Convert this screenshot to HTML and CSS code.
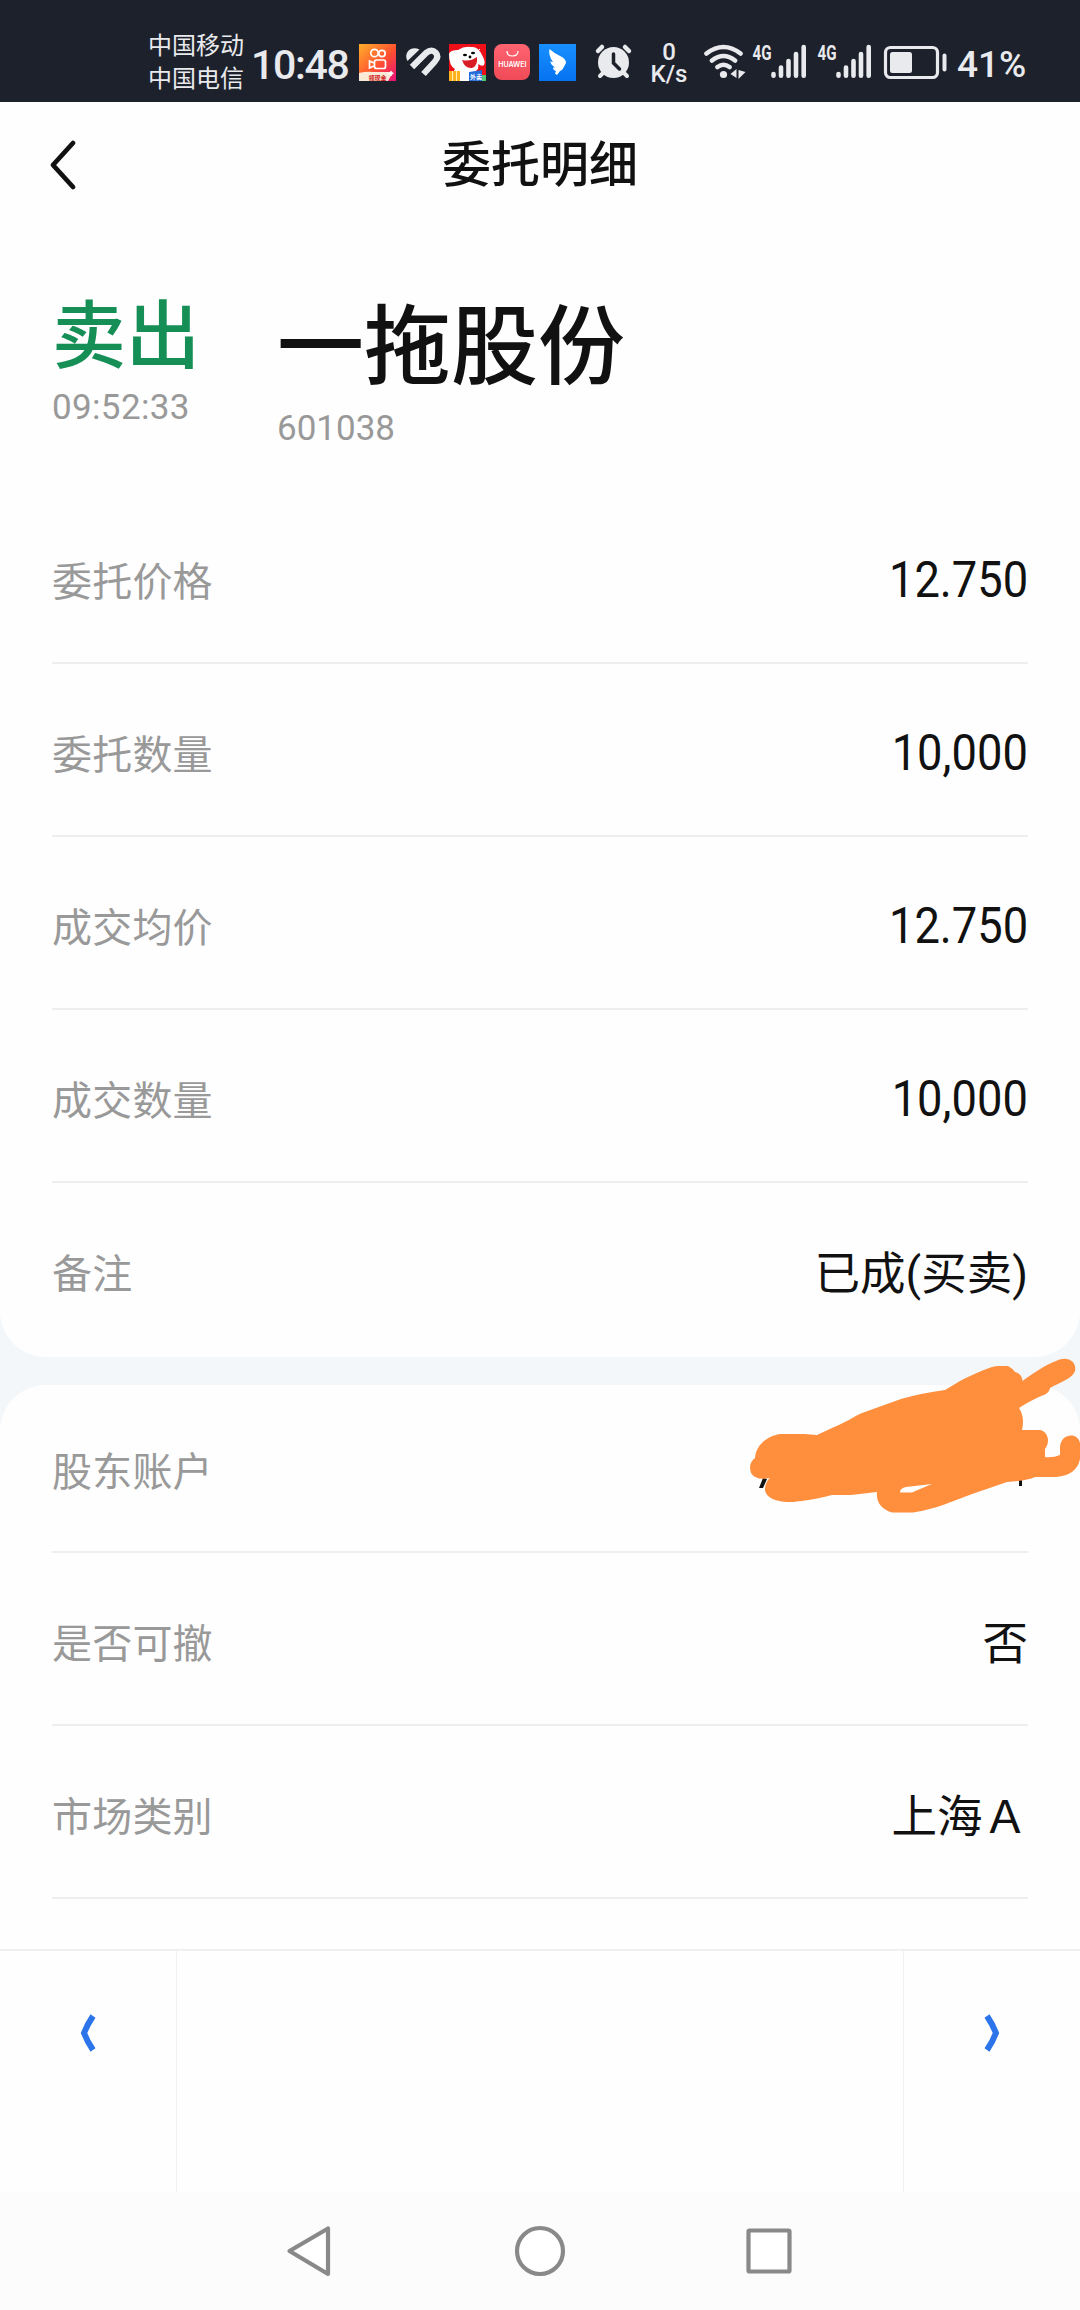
FILE: index.html
```html
<!DOCTYPE html>
<html lang="zh-CN">
<head>
<meta charset="utf-8">
<title>委托明细</title>
<link rel="stylesheet" href="styles.css">
</head>
<body>
<div class="screen">
  <header class="status">
    <div class="carriers"><span>中国移动</span><span>中国电信</span></div>
    <span class="clock">10:48</span>
    <svg class="status-icons" width="281" height="50" viewBox="355 38 281 50">
      <defs>
        <linearGradient id="ks" x1="0" y1="0" x2="1" y2="1"><stop offset="0" stop-color="#ffb02a"/><stop offset=".55" stop-color="#ff5030"/><stop offset="1" stop-color="#e8107a"/></linearGradient>
        <linearGradient id="hw" x1="0" y1="0" x2="0" y2="1"><stop offset="0" stop-color="#ff6470"/><stop offset="1" stop-color="#f04a58"/></linearGradient>
        <linearGradient id="dd" x1="0" y1="0" x2="0" y2="1"><stop offset="0" stop-color="#1890ff"/><stop offset="1" stop-color="#0672f0"/></linearGradient>
      </defs>
      <rect x="359" y="44" width="37" height="37" fill="url(#ks)"/>
      <g fill="none" stroke="#fff" stroke-width="1.700"><circle cx="374.500" cy="53" r="3.700"/><circle cx="382" cy="53.500" r="3.200"/><rect x="374.500" y="60" width="11" height="8.500" rx="2"/><path d="M374 63l-4.500-2v7l4.500-2"/></g>
      <path d="M359 73q8-2 14-1h20l-5 9h-29z" fill="#fbe9d8"/>
      <text x="368.500" y="79.500" class="badge-text red">领现金</text>
      <path d="M391 71v5M388.500 73.500h5" stroke="#fff" stroke-width="1.500"/>
      <g stroke="#e9eaee" fill="none"><path d="M407.500 61C403 53 411 45 419.500 49.500Z" fill="#e9eaee" stroke="none"/><path d="M412 67L426 53Q431.500 48.500 435.500 52.500T434.500 62L423.500 74" stroke-width="6.200"/></g>
      <rect x="449" y="44" width="37" height="37" fill="#ee0f18"/>
      <path d="M449 54q1-4 9-4 6-4 13-3 7-1 11 8 4 7 2 10-2 2-6-1 2 5-4 8 4 3 3 9h-26q1-8 4-12-6-3-6-15z" fill="#fff"/>
      <path d="M462 60q8 2 15-3 1 9-5 11-7 1-10-8z" fill="#d81e24"/><ellipse cx="465" cy="55" rx="2" ry="1.200"/><ellipse cx="473" cy="53" rx="2" ry="1.200"/><circle cx="470" cy="57" r="1.400"/>
      <path d="M449 71h11v10h-11z" fill="#ffb21d"/><path d="M452.500 71v10M456.500 71v10" stroke="#fff0b0"/>
      <path d="M469 72l13-2v11h-13z" fill="#246bdc"/><text x="470" y="79" class="badge-text white">外卖</text><path d="M482 75h4v6h-4z" fill="#51c877"/>
      <path d="M476 49l4 4m0-4l-4 4" stroke="#fff"/>
      <rect x="494" y="44" width="36" height="36" rx="8" fill="url(#hw)"/>
      <path d="M507 51q0 5 5.500 5t5.500-5" fill="none" stroke="#fff" stroke-width="1.200"/><text x="512.300" y="67" class="huawei">HUAWEI</text>
      <rect x="539" y="44" width="37" height="37" fill="url(#dd)"/>
      <path d="M549.500 49Q555 54 561 56.500Q566 59 566 63Q564 67 562 70L560 71 557 75 555 73.500 556 71Q553 70 553 67.500L555 67.500Q551 65 550 61.500L553 62Q548 55 549.500 49Z" fill="#fff"/>
      <g fill="#e9eaee" stroke="#e9eaee" stroke-linecap="round"><circle cx="613.500" cy="62.500" r="15.500" stroke="none"/><path d="M598 51l4-4M629 51l-4-4" stroke-width="4.500"/><path d="M604 72l-4 4M623 72l4 4" stroke-width="4"/></g>
      <path d="M613.500 54v9l6 6" fill="none" stroke="#1d202b" stroke-width="3.500" stroke-linecap="round"/>
    </svg>
    <div class="speed"><span>0</span><span>K/s</span></div>
    <svg class="network-icons" width="245" height="50" viewBox="702 38 245 50">
      <g fill="none" stroke="#e9eaee" stroke-width="4.600" stroke-linecap="round"><path d="M706.500 53.500q17-13 34 0M712 60.500q11.500-9 23 0M717.500 67q6-4.500 12 0"/></g>
      <circle cx="723.500" cy="74.500" r="3.600" fill="#e9eaee"/><path d="M736.500 69v9l-6-4zM738.500 70l7 2-7 7z" fill="#e9eaee"/>
      <text x="752.500" y="60" class="gen" textLength="19" lengthAdjust="spacingAndGlyphs">4G</text><text x="817.500" y="60" class="gen" textLength="19" lengthAdjust="spacingAndGlyphs">4G</text>
      <path id="bars" d="M773.500 74v1.800M781 67.500v8.300M788.500 61v14.800M796 54v21.800M803.700 47v28.800" stroke="#e9eaee" stroke-width="4.600" stroke-linecap="round"/>
      <use href="#bars" x="65"/>
      <rect x="885.500" y="47.500" width="52" height="30" rx="5" fill="none" stroke="#e9eaee" stroke-width="3.200"/><rect x="890" y="52" width="22" height="21" rx="2.500" fill="#e9eaee"/><path d="M944.500 55.500v14" stroke="#e9eaee" stroke-width="4" stroke-linecap="round"/>
    </svg>
    <span class="percent">41%</span>
  </header>

  <nav class="titlebar">
    <svg class="back" width="30" height="54" viewBox="48 138 30 54"><path d="M73 143L53 165l20 22" fill="none" stroke="#111" stroke-width="4.800" stroke-linecap="round" stroke-linejoin="round"/></svg>
    <h1>委托明细</h1>
  </nav>

  <main class="content">
    <section class="card main-card">
      <div class="summary">
        <div class="side"><strong class="sell">卖出</strong><span class="meta time">09:52:33</span></div>
        <div class="stock"><strong class="name">一拖股份</strong><span class="meta">601038</span></div>
      </div>
      <div class="row"><span class="label">委托价格</span><span class="number">12.750</span></div>
      <div class="row"><span class="label">委托数量</span><span class="number">10,000</span></div>
      <div class="row"><span class="label">成交均价</span><span class="number">12.750</span></div>
      <div class="row"><span class="label">成交数量</span><span class="number">10,000</span></div>
      <div class="row last"><span class="label">备注</span><span class="value">已成(买卖)</span></div>
    </section>
    <section class="card account-card">
      <div class="row first"><span class="label">股东账户</span>
        <svg class="scribble" width="340" height="160" viewBox="740 1355 340 160">
          <path d="M763 1478l4 1-4 9h-4zM1019 1480h3v6h-3z" fill="#111"/>
          <path fill-rule="evenodd" fill="#ff8e3d" d="M755 1458C756 1444 769 1435 781 1434H804L817 1435L832 1428C845 1423 853 1417 862 1413L901 1399Q922 1393 945 1390L960 1381C974 1374 990 1366 999 1366H1008Q1012 1368 1015 1372Q1022 1374 1022.500 1381C1032 1374 1045 1365 1056 1361C1068 1355 1077 1362 1075 1371C1073 1378 1059 1383 1050 1388Q1049 1394 1041 1396Q1028 1402 1019 1408Q1025 1417 1022 1430H1040C1049 1432 1050 1443 1045 1449V1457Q1053 1458 1060 1455V1447C1061 1433 1078 1432 1080 1443V1459Q1077 1475 1056 1477H1035Q1026 1481 1007 1482L975 1493C952 1501 937 1509 913 1512.500H892C881 1509 876 1502 877 1492L851 1495H832Q814 1500 793 1502C776 1503 764 1497 765 1488Q766 1481 770 1478Q756 1481 751 1473Q748 1463 755 1458ZM906 1487Q900 1488 900 1492.500H912Q922 1488 932 1484Z"/>
        </svg>
      </div>
      <div class="row"><span class="label">是否可撤</span><span class="value">否</span></div>
      <div class="row"><span class="label">市场类别</span><span class="value">上海Ａ</span></div>
    </section>
  </main>

  <footer class="pager">
    <div class="page-button"><svg width="20" height="42" viewBox="0 0 20 42"><path d="M15 4Q9 13 6 21Q9 29 15 38" fill="none" stroke="#2c74e9" stroke-width="6"/></svg></div>
    <div class="page-middle"></div>
    <div class="page-button next"><svg width="20" height="42" viewBox="0 0 20 42"><path d="M5 4Q11 13 14 21Q11 29 5 38" fill="none" stroke="#2c74e9" stroke-width="6"/></svg></div>
  </footer>
  <nav class="system">
    <svg width="1080" height="118" viewBox="0 2192 1080 118" fill="#fff" stroke="#898989" stroke-width="4.200" stroke-linejoin="round"><path d="M328 2228.500v45.500L289.500 2251z"/><circle cx="540" cy="2251" r="23"/><rect x="748.500" y="2230.500" width="41" height="41" rx="1"/></svg>
  </nav>
</div>
</body>
</html>
```
FILE: styles.css
```css
* { box-sizing: border-box; }
body { margin: 0; background: #fefefe; color: #111; font-family: Roboto, "Noto Sans CJK SC", sans-serif; }
.screen { width: 1080px; height: 2310px; display: flex; flex-direction: column; overflow: hidden; }
.status { flex: 0 0 102px; background: #1d212c; color: #e9eaee; display: flex; align-items: center; padding: 24px 0 0 148px; white-space: nowrap; }
.status svg { display: block; flex: none; }
.carriers { width: 103px; flex: none; display: flex; flex-direction: column; font-size: 24px; line-height: 33px; }
.clock { width: 104px; flex: none; font-size: 41px; font-weight: 500; line-height: 50px; letter-spacing: -1.3px; padding-top: 3px; }
.badge-text { font-size: 6px; font-weight: 700; }
.red { fill: #c22; }
.white { fill: #fff; }
.huawei { font: 600 7px Inter, sans-serif; fill: #fff; text-anchor: middle; }
.speed { width: 66px; flex: none; display: flex; flex-direction: column; align-items: center; font-size: 24px; font-weight: 500; line-height: 22px; }
.gen { font: 700 20px Roboto, sans-serif; fill: #e9eaee; }
.percent { font-size: 37px; font-weight: 500; line-height: 50px; padding: 3px 0 0 10px; }
.titlebar { flex: 0 0 126px; display: grid; grid-template-columns: 1fr auto 1fr; align-items: center; padding: 0 48px; }
.titlebar h1 { margin: 0; font-size: 49px; line-height: 60px; font-weight: 500; padding-top: 1px; }
.content { flex: 0 0 1721px; display: flex; flex-direction: column; gap: 28px; background: #f3f7fa; }
.card { background: #fefefe; padding: 0 52px; }
.main-card { flex: 0 0 1129px; border-radius: 0 0 46px 46px; }
.account-card { flex: 1; border-radius: 46px 46px 0 0; }
.summary { height: 263px; display: flex; align-items: flex-start; }
.side, .stock { display: flex; flex-direction: column; }
.side { width: 225px; padding-top: 59px; }
.stock { padding-top: 60px; }
.sell { font-size: 74px; line-height: 100px; font-weight: 500; color: #168f57; }
.name { font-size: 87px; line-height: 120px; font-weight: 500; }
.meta { font-size: 35px; line-height: 42px; color: #999; }
.time { letter-spacing: .35px; }
.row { height: 173px; padding-top: 13px; border-bottom: 2px solid #eee; display: flex; align-items: center; justify-content: space-between; }
.row.last { border-bottom: 0; padding-top: 10px; }
.row.first { height: 168px; padding-top: 9px; position: relative; }
.label { font-size: 40px; line-height: 56px; letter-spacing: .2px; color: #999; }
.number { font-size: 49.5px; line-height: 56px; transform: scaleX(.915); transform-origin: right; position: relative; top: -3px; }
.value { font-size: 45.5px; line-height: 60px; }
.scribble { position: absolute; right: -52px; top: -30px; }
.pager { flex: 0 0 243px; display: flex; border-top: 2px solid #f0f0f0; background: #fefefe; }
.page-button { width: 177px; display: flex; justify-content: center; padding-top: 61px; border-right: 1px solid #f0f0f0; }
.page-button.next { border-right: 0; border-left: 1px solid #f0f0f0; }
.page-middle { flex: 1; }
.system { flex: 0 0 118px; background: #fcfcfc; }
.system svg { display: block; }
```
